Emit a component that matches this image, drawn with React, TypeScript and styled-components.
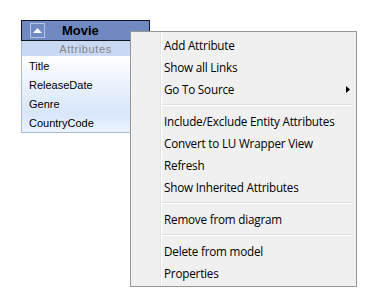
import React from "react";
import styled, { createGlobalStyle } from "styled-components";

const GlobalStyle = createGlobalStyle`
    html, body {
        margin: 0;
        padding: 0;
        background: #ffffff;
    }
`;

const Canvas = styled.div`
    position: relative;
    width: 376px;
    height: 298px;
    overflow: hidden;
    background: #ffffff;
`;

const Entity = styled.div`
    position: absolute;
    left: 21px;
    top: 20px;
    width: 127px;
    display: flex;
    flex-direction: column;
    border: 1px solid #a9bbd6;
    border-top: none;
    font-family: "Liberation Sans", Arial, sans-serif;
`;

const Header = styled.div`
    height: 19px;
    display: flex;
    align-items: center;
    background: #7189c1;
    border: 1px solid #0f1525;
    margin: 0 -1px;
    padding: 0 8px;
`;

const Toggle = styled.div`
    width: 13px;
    height: 13px;
    border: 1px solid #b3c4ea;
    display: flex;
    align-items: center;
    justify-content: center;
    flex-shrink: 0;
`;

const Title = styled.div`
    margin-left: 17px;
    font-weight: bold;
    font-size: 13px;
    color: #000000;
`;

const Band = styled.div`
    height: 15px;
    display: flex;
    align-items: center;
    justify-content: center;
    background: #c9d9f3;
    color: #858585;
    font-size: 11px;
    letter-spacing: 0.6px;
`;

const Rows = styled.div`
    display: flex;
    flex-direction: column;
    background: linear-gradient(#ffffff 0%, #e6effc 45%, #d8e6fb 75%, #ecf3fd 100%);
`;

const Row = styled.div`
    height: 19px;
    line-height: 20px;
    padding-left: 7px;
    font-size: 11px;
    color: #000000;
`;

const Menu = styled.div`
    position: absolute;
    left: 130px;
    top: 31px;
    width: 225px;
    padding: 2px 0 2px;
    background: #f0f0f0;
    border: 1px solid #979797;
    display: flex;
    flex-direction: column;
    font-family: "Open Sans", "Segoe UI", sans-serif;
    font-size: 11.7px;
    color: #000000;
    background-image: linear-gradient(to right, transparent 29px, #e2e3e3 29px, #e2e3e3 30px, #ffffff 30px, #ffffff 31px, transparent 31px);
`;

const Item = styled.div`
    height: 22px;
    display: flex;
    align-items: center;
    padding-left: 33px;
    padding-right: 6px;
    letter-spacing: -0.2px;
`;

const Label = styled.span`
    flex: 1;
`;

const Separator = styled.div`
    height: 10px;
    display: flex;
    align-items: center;
    padding-left: 31px;
    padding-right: 4px;
    &::after {
        content: "";
        flex: 1;
        height: 1px;
        background: #e0e0e0;
        border-bottom: 1px solid #ffffff;
    }
`;

const Arrow = () => (
    <svg width="4" height="7" viewBox="0 0 4 7">
        <path d="M0 0 L4 3.5 L0 7 Z" fill="#000" />
    </svg>
);

const groups = [
    ["Add Attribute", "Show all Links", "Go To Source"],
    ["Include/Exclude Entity Attributes", "Convert to LU Wrapper View", "Refresh", "Show Inherited Attributes"],
    ["Remove from diagram"],
    ["Delete from model", "Properties"],
];

const attributes = ["Title", "ReleaseDate", "Genre", "CountryCode"];

const App = () => (
    <Canvas>
        <GlobalStyle />
        <Entity>
            <Header>
                <Toggle>
                    <svg width="9" height="5" viewBox="0 0 9 5">
                        <path d="M0 5 L4.5 0 L9 5 Z" fill="#ffffff" />
                    </svg>
                </Toggle>
                <Title>Movie</Title>
            </Header>
            <Band>Attributes</Band>
            <Rows>
                {attributes.map((a) => (
                    <Row key={a}>{a}</Row>
                ))}
            </Rows>
        </Entity>
        <Menu>
            {groups.map((group, gi) => (
                <React.Fragment key={gi}>
                    {gi > 0 && <Separator />}
                    {group.map((label) => (
                        <Item key={label}>
                            <Label>{label}</Label>
                            {label === "Go To Source" && <Arrow />}
                        </Item>
                    ))}
                </React.Fragment>
            ))}
        </Menu>
    </Canvas>
);

export default App;
